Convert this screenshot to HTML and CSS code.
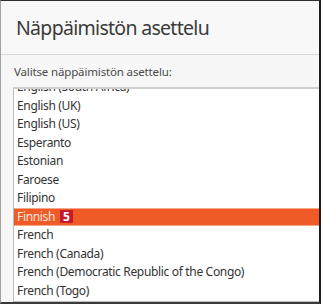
FILE: index.html
```html
<!DOCTYPE html>
<html lang="fi">
<head>
<meta charset="utf-8">
<link rel="stylesheet" href="styles.css">
</head>
<body>
<div class="window">
  <header class="header">
    <h1 class="title">Näppäimistön asettelu</h1>
  </header>
  <main class="content">
    <div class="label">Valitse näppäimistön asettelu:</div>
    <div class="list">
      <ul class="items">
        <li class="item">English (South Africa)</li>
        <li class="item">English (UK)</li>
        <li class="item">English (US)</li>
        <li class="item">Esperanto</li>
        <li class="item">Estonian</li>
        <li class="item">Faroese</li>
        <li class="item">Filipino</li>
        <li class="item selected">Finnish <span class="badge">5</span></li>
        <li class="item">French</li>
        <li class="item">French (Canada)</li>
        <li class="item">French (Democratic Republic of the Congo)</li>
        <li class="item">French (Togo)</li>
      </ul>
    </div>
  </main>
</div>
</body>
</html>
```

FILE: styles.css
```css
* { box-sizing: border-box; }
html, body {
  margin: 0;
  padding: 0;
  width: 321px;
  height: 304px;
  overflow: hidden;
  background: #2b2b2b;
}
.window {
  width: 321px;
  height: 304px;
  display: flex;
  flex-direction: column;
  background: #f6f7f6;
  border-top: 1px solid #2e2e2e;
  border-left: 1px solid #a0a0a0;
  border-right: 2px solid #1e1e1e;
  border-bottom: 2px solid #3a3a3a;
  font-family: "Noto Sans", "DejaVu Sans", sans-serif;
  color: #3c3c3c;
}
.header {
  height: 54px;
  flex: none;
  display: flex;
  align-items: center;
  padding-left: 15px;
  border-bottom: 1px solid #d8d8d8;
  background: #f7f8f7;
}
.title {
  margin: 0;
  font-weight: normal;
  font-size: 19.5px;
  letter-spacing: -0.7px;
  color: #3b3b3b;
}
.content {
  flex: 1;
  display: flex;
  flex-direction: column;
  padding: 9px 0 0 12px;
  min-height: 0;
}
.label {
  font-size: 11.5px;
  letter-spacing: -0.15px;
  color: #4a4a4a;
  height: 23px;
  padding-left: 1px;
}
.list {
  flex: 1;
  min-height: 0;
  overflow: hidden;
  background: #fff;
  border-top: 2px solid #cfcfcf;
  border-left: 1px solid #bdbdbd;
  border-bottom: 1px solid #bdbdbd;
}
.items {
  list-style: none;
  margin: -11px 0 0 0;
  padding: 0;
}
.item {
  height: 18.5px;
  line-height: 18.5px;
  font-size: 12px;
  letter-spacing: -0.33px;
  padding-left: 3px;
  color: #333;
  white-space: nowrap;
}
.selected {
  background: #ef5a26;
  color: #fde8df;
  box-shadow: inset 0 1px 0 #f5a78a, inset 0 -1px 0 #f5a78a;
}
.badge {
  display: inline-block;
  background: #c5192d;
  color: #fff;
  font-weight: bold;
  font-size: 12px;
  line-height: 13px;
  letter-spacing: 0;
  padding: 0 3px;
  margin-left: 2px;
}
```
